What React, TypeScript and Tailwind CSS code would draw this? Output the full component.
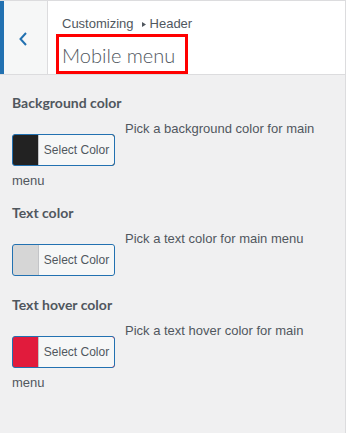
import React from "react";

interface ColorControl {
  label: string;
  swatch: string;
  description: string;
}

const controls: ColorControl[] = [
  {
    label: "Background color",
    swatch: "bg-[#222222]",
    description: "Pick a background color for main menu",
  },
  {
    label: "Text color",
    swatch: "bg-[#d6d6d6]",
    description: "Pick a text color for main menu",
  },
  {
    label: "Text hover color",
    swatch: "bg-[#e11b3c]",
    description: "Pick a text hover color for main menu",
  },
];

function ColorButton({ swatch }: { swatch: string }) {
  return (
    <button
      type="button"
      className={`flex h-[32px] w-[103px] overflow-hidden rounded-[3px] border border-[#2271b1] pl-[25px] ${swatch}`}
    >
      <span className="block h-full w-[76px] rounded-r-[2px] border-l border-[#c3c4c7] bg-[#f6f7f7] text-center text-[12px] leading-[30px] text-[#50575e]">
        Select Color
      </span>
    </button>
  );
}

export default function App() {
  return (
    <div className="h-[433px] w-[346px] border-r border-[#dcdcde] bg-[#f0f0f1] font-['Liberation_Sans',Arial,sans-serif] text-[#50575e]">
      <div className="flex h-[75px] border-y border-[#dcdcde] bg-white">
        <div className="w-[4px] bg-[#2271b1]" />
        <div className="flex w-[44px] items-center border-r border-[#dcdcde] bg-[#f6f7f7] pl-[15px] pt-[3px]">
          <svg width="8" height="14" viewBox="0 0 8 14" fill="none">
            <polyline
              points="7,1 1.5,7 7,13"
              stroke="#2271b1"
              strokeWidth="2"
            />
          </svg>
        </div>
        <div className="flex flex-col pl-[8px] pt-[14px]">
          <div className="ml-[6px] flex items-center text-[13px] leading-[18px]">
            <span>Customizing</span>
            <svg
              width="4"
              height="5"
              viewBox="0 0 4 5"
              className="ml-[8px] mr-[4px]"
            >
              <polygon points="0,0 4,2.5 0,5" fill="#50575e" />
            </svg>
            <span>Header</span>
          </div>
          <div className="mt-[1px] h-[40px] w-[132px] border-[3px] border-[#ff0000] pl-[3px] pt-[4px]">
            <h3 className="font-['Lato',sans-serif] text-[20px] font-light leading-[28px] text-[#50575e]">
              Mobile menu
            </h3>
          </div>
        </div>
      </div>

      <div className="flex flex-col gap-[13px] px-[12px] pt-[18px]">
        {controls.map((c) => (
          <div key={c.label}>
            <h4 className="mb-[7px] font-['Lato',sans-serif] text-[14px] font-bold leading-[20px]">
              {c.label}
            </h4>
            <div className="text-[13px] leading-[18px]">
              <span className="mr-[10px] inline-block pb-[6px] pt-[14px] align-top">
                <ColorButton swatch={c.swatch} />
              </span>
              {c.description}
            </div>
          </div>
        ))}
      </div>
    </div>
  );
}
